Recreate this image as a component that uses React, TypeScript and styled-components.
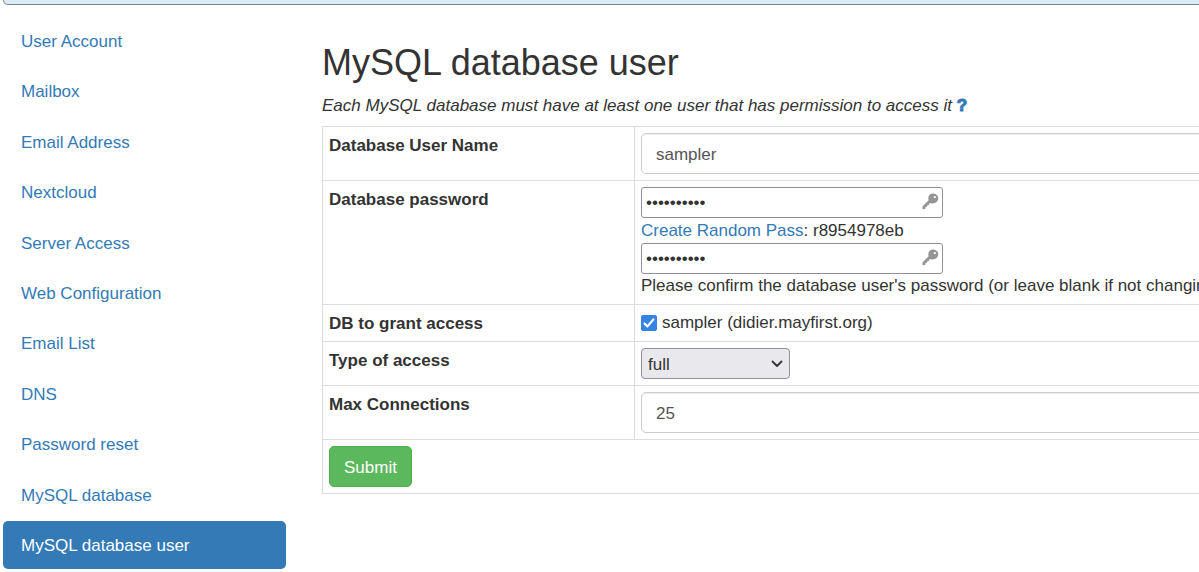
import React from 'react';
import styled, { createGlobalStyle, css } from 'styled-components';

const GlobalStyle = createGlobalStyle`
  *, *::before, *::after { box-sizing: border-box; }
  body {
    margin: 0;
    overflow: hidden;
    background: #fff;
    color: #333;
    font: 17px/24px "Liberation Sans", Arial, sans-serif;
  }
  a { color: #337ab7; text-decoration: none; }
  input, select, button { font: inherit; }
`;

const Page = styled.div`
  display: flex;
  flex-direction: column;
  width: calc(100% + 44px);
  min-height: 100vh;
  padding: 0 0 3px 3px;
`;

const Notice = styled.div`
  height: 5px;
  border: 1px solid #7d8488;
  border-top: 0;
  border-radius: 0 0 5px 5px;
  background: #d9edf7;
`;

const Columns = styled.div`
  flex: 1;
  display: grid;
  grid-template-columns: 283px minmax(0, 1fr);
  gap: 36px;
  padding-top: 12px;
`;

const Nav = styled.nav`
  display: flex;
  flex-direction: column;
  justify-content: space-between;
`;

const NavLink = styled.a<{ $active?: boolean }>`
  padding: 13px 18px 11px;
  border-radius: 5px;
  ${({ $active }) => $active && css`
    background: #337ab7;
    color: #fff;
  `}
`;

const Main = styled.main`
  padding-top: 26px;
`;

const Title = styled.h2`
  margin: 0 0 11px;
  font-size: 36px;
  font-weight: 400;
  line-height: 40px;
`;

const Intro = styled.p`
  margin: 0 0 8px;
  font-style: italic;
`;

const Help = styled.a`
  font-style: normal;
  font-weight: 700;
  -webkit-text-stroke: 1px currentColor;
`;

const FormTable = styled.table`
  width: 100%;
  border-collapse: collapse;
  table-layout: fixed;
`;

const Cell = styled.td`
  padding: 6px;
  border: 1px solid #ddd;
  vertical-align: top;
  white-space: nowrap;
`;

const LabelCell = styled(Cell).attrs({ as: 'th', scope: 'row' })`
  width: 312px;
  padding: 7px 6px 5px;
  text-align: left;
`;

const TextInput = styled.input`
  display: block;
  width: 100%;
  height: 41px;
  padding: 8px 14px 6px;
  border: 1px solid #ccc;
  border-radius: 5px;
  background: #fff;
  box-shadow: inset 0 1px 1px rgba(0, 0, 0, 0.075);
  color: #555;
`;

const PasswordBox = styled.div`
  position: relative;
  width: 302px;
`;

const PasswordInput = styled.input`
  display: block;
  width: 100%;
  height: 31px;
  padding: 1px 30px 1px 4px;
  border: 1px solid #8f8f9d;
  border-radius: 3px;
  background: #fff;
  color: #333;
`;

const KeyMark = styled.svg`
  position: absolute;
  top: 6px;
  right: 4px;
  width: 17px;
  height: 17px;
`;

const RandomPass = styled.div`
  padding-top: 1px;
`;

const CheckLabel = styled.label`
  display: flex;
  align-items: center;
  gap: 5px;
`;

const CheckWrap = styled.span`
  position: relative;
  width: 16px;
  height: 16px;
`;

const Checkbox = styled.input`
  appearance: none;
  display: block;
  width: 16px;
  height: 16px;
  margin: 0;
  border: 1px solid #8f8f9d;
  border-radius: 2px;
  &:checked { border-color: #3584e4; background: #3584e4; }
  &:checked + svg { display: block; }
`;

const Tick = styled.svg`
  display: none;
  position: absolute;
  inset: 0;
  pointer-events: none;
`;

const SelectBox = styled.div`
  position: relative;
  width: 149px;
`;

const Select = styled.select`
  appearance: none;
  display: block;
  width: 100%;
  height: 31px;
  padding: 2px 30px 0 6px;
  border: 1px solid #8f8f9d;
  border-radius: 4px;
  background: #e9e9ed;
  color: #333;
`;

const Chevron = styled.svg`
  position: absolute;
  top: 11px;
  right: 7px;
  pointer-events: none;
`;

const SubmitButton = styled.button`
  display: block;
  height: 41px;
  padding: 2px 14px 0;
  border: 1px solid #4cae4c;
  border-radius: 5px;
  background: #5cb85c;
  color: #fff;
`;

const navItems = [
  'User Account', 'Mailbox', 'Email Address', 'Nextcloud', 'Server Access',
  'Web Configuration', 'Email List', 'DNS', 'Password reset', 'MySQL database',
  'MySQL database user',
];

function PasswordField({ id, label }: { id: string; label: string }) {
  return (
    <PasswordBox>
      <PasswordInput id={id} type="password" aria-label={label} defaultValue="r8954978eb" />
      <KeyMark viewBox="0 0 17 17" aria-hidden="true">
        <path
          fill="#949494"
          fillRule="evenodd"
          d="M11.500.6C8.600.4 6.300 2.300 6.300 5.100c0 .9.1 1.500.4 2.200L.9 13c-.3.3-.4.5-.4.9v1.500c0 .6.3.9.9.9h.9l1-.9.2-1.300 1.300-.2.3-1.400 1.400-.2.4-1.400 1.400-.9c.8.3 1.500.5 2.400.4 3-.1 5.400-1.900 5.500-4.900C16.300 2.600 14.300.8 11.500.6Zm1.300 2.500a1.100 1.100 0 1 1 0 2.200 1.100 1.100 0 0 1 0-2.200Z"
        />
      </KeyMark>
    </PasswordBox>
  );
}

export default function App() {
  return (
    <>
      <GlobalStyle />
      <Page>
        <Notice />
        <Columns>
          <Nav>
            {navItems.map((item) => (
              <NavLink key={item} href="#" $active={item === 'MySQL database user'}>{item}</NavLink>
            ))}
          </Nav>
          <Main>
            <Title>MySQL database user</Title>
            <Intro>
              Each MySQL database must have at least one user that has permission to access it{' '}
              <Help href="#">?</Help>
            </Intro>
            <form onSubmit={(e) => e.preventDefault()}>
              <FormTable>
                <tbody>
                  <tr>
                    <LabelCell><label htmlFor="db-user">Database User Name</label></LabelCell>
                    <Cell><TextInput id="db-user" type="text" defaultValue="sampler" /></Cell>
                  </tr>
                  <tr>
                    <LabelCell><label htmlFor="db-pass">Database password</label></LabelCell>
                    <Cell>
                      <PasswordField id="db-pass" label="Database password" />
                      <RandomPass><a href="#">Create Random Pass</a>: r8954978eb</RandomPass>
                      <PasswordField id="db-pass-confirm" label="Confirm database password" />
                      <div>Please confirm the database user's password (or leave blank if not changing).</div>
                    </Cell>
                  </tr>
                  <tr>
                    <LabelCell>DB to grant access</LabelCell>
                    <Cell>
                      <CheckLabel>
                        <CheckWrap>
                          <Checkbox type="checkbox" defaultChecked />
                          <Tick width="16" height="16" viewBox="0 0 16 16" aria-hidden="true">
                            <path d="M3.6 8.6l2.9 2.8 5.9-7" fill="none" stroke="#fff" strokeWidth="2.2" strokeLinecap="round" strokeLinejoin="round" />
                          </Tick>
                        </CheckWrap>
                        sampler (didier.mayfirst.org)
                      </CheckLabel>
                    </Cell>
                  </tr>
                  <tr>
                    <LabelCell><label htmlFor="access">Type of access</label></LabelCell>
                    <Cell>
                      <SelectBox>
                        <Select id="access" defaultValue="full">
                          <option value="full">full</option>
                        </Select>
                        <Chevron width="12" height="10" viewBox="0 0 12 10" aria-hidden="true">
                          <path d="M1.5 2.5L6 7l4.500-4.500" fill="none" stroke="#333" strokeWidth="1.8" strokeLinecap="round" strokeLinejoin="round" />
                        </Chevron>
                      </SelectBox>
                    </Cell>
                  </tr>
                  <tr>
                    <LabelCell><label htmlFor="max-conn">Max Connections</label></LabelCell>
                    <Cell><TextInput id="max-conn" type="text" defaultValue="25" /></Cell>
                  </tr>
                  <tr>
                    <Cell colSpan={2}><SubmitButton type="submit">Submit</SubmitButton></Cell>
                  </tr>
                </tbody>
              </FormTable>
            </form>
          </Main>
        </Columns>
      </Page>
    </>
  );
}
